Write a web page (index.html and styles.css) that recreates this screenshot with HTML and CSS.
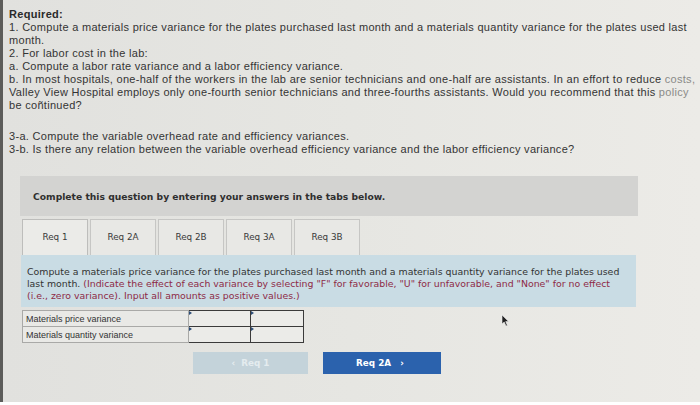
FILE: index.html
```html
<!DOCTYPE html>
<html>
<head>
<meta charset="utf-8">
<link rel="stylesheet" href="styles.css">
</head>
<body>
<div class="page">
  <div class="question">
    <p class="para"><b class="req">Required:</b><br>1. Compute a materials price variance for the plates purchased last month and a materials quantity variance for the plates used last<br>month.<br>2. For labor cost in the lab:<br>a. Compute a labor rate variance and a labor efficiency variance.<br>b. In most hospitals, one-half of the workers in the lab are senior technicians and one-half are assistants. In an effort to reduce <span class="glare">costs,</span><br>Valley View Hospital employs only one-fourth senior technicians and three-fourths assistants. Would you recommend that this <span class="glare">policy</span><br>be coñtinued?</p>
    <p class="para para2">3-a. Compute the variable overhead rate and efficiency variances.<br>3-b. Is there any relation between the variable overhead efficiency variance and the labor efficiency variance?</p>
  </div>

  <div class="panel">
    <div class="banner">Complete this question by entering your answers in the tabs below.</div>
    <div class="tabs">
      <div class="tab active">Req 1</div>
      <div class="tab">Req 2A</div>
      <div class="tab">Req 2B</div>
      <div class="tab">Req 3A</div>
      <div class="tab">Req 3B</div>
    </div>
    <div class="content">
      Compute a materials price variance for the plates purchased last month and a materials quantity variance for the plates used<br>last month. <span class="note">(Indicate the effect of each variance by selecting "F" for favorable, "U" for unfavorable, and "None" for no effect<br>(i.e., zero variance). Input all amounts as positive values.)</span>
    </div>
    <table class="grid">
      <tr>
        <td class="label">Materials price variance</td>
        <td class="input amt"></td>
        <td class="input sel"></td>
      </tr>
      <tr>
        <td class="label">Materials quantity variance</td>
        <td class="input amt"></td>
        <td class="input sel"></td>
      </tr>
    </table>
    <div class="nav">
      <div class="btn prev">&lsaquo;&nbsp;&nbsp;Req 1</div>
      <div class="btn next">Req 2A&nbsp;&nbsp;&nbsp;&rsaquo;</div>
    </div>
  </div>

  <svg class="cursor" width="9" height="13" viewBox="0 0 9 13"><path d="M1 1 L1 10 L3.2 8 L5 12 L6.4 11.4 L4.7 7.6 L7.6 7.6 Z" fill="#222" stroke="#eee" stroke-width="0.6"/></svg>
</div>
</body>
</html>
```
FILE: styles.css
```css
html, body {
  margin: 0;
  padding: 0;
}
body {
  width: 700px;
  height: 405px;
  overflow: hidden;
  background: #ffffff;
}
.page {
  position: relative;
  box-sizing: border-box;
  width: 700px;
  height: 402px;
  border-left: 3px solid #5c5c5a;
  background: linear-gradient(to right, #e1e1de 0%, #e6e6e2 50%, #ecebe7 100%);
  padding: 8px 0 0 6px;
  font-family: "Liberation Sans", Arial, sans-serif;
  color: #343434;
}
.question {
  font-size: 11px;
  line-height: 13px;
  letter-spacing: 0.3px;
}
.para {
  margin: 0;
  white-space: nowrap;
}
.para2 {
  margin-top: 18px;
}
.req {
  font-weight: bold;
  color: #2a2a2a;
}
.glare {
  color: #8a8a88;
}
.panel {
  margin: 20px 0 0 11px;
  width: 618px;
  font-family: "DejaVu Sans", Verdana, sans-serif;
}
.banner {
  height: 40px;
  background: #d3d3d1;
  display: flex;
  align-items: center;
  padding-left: 13px;
  font-size: 9.2px;
  font-weight: bold;
  color: #2f2f2f;
}
.tabs {
  display: flex;
  gap: 2px;
  margin: 3px 0 0 2px;
}
.tab {
  box-sizing: border-box;
  width: 66px;
  height: 36px;
  border: 1px solid #c6c6c4;
  border-bottom: none;
  background: #e8e8e5;
  display: flex;
  align-items: center;
  justify-content: center;
  font-size: 8.8px;
  color: #3a3a3a;
  padding-bottom: 2px;
}
.tab.active {
  background: #ebebe8;
  border-color: #bdbdbb;
}
.content {
  margin-left: 1px;
  width: 615px;
  box-sizing: border-box;
  height: 52px;
  background: #c9dce4;
  padding: 11px 0 0 6px;
  font-size: 9.4px;
  line-height: 12px;
  color: #333;
  white-space: nowrap;
}
.note {
  color: #8e2a46;
}
.grid {
  margin: 3px 0 0 2px;
  border-collapse: collapse;
  font-family: "Liberation Sans", Arial, sans-serif;
  font-size: 9px;
  color: #333;
}
.grid td {
  height: 15px;
  padding: 0;
}
.label {
  width: 162px;
  border: 1px solid #a9a9a7;
  padding-left: 3px !important;
  background: #e9e9e6;
}
.input {
  position: relative;
  border: 1.5px solid #3a3a3a;
  background: #ebebe8;
}
.input::before {
  content: "";
  position: absolute;
  left: 0;
  top: 0;
  border-left: 3px solid #2c4d78;
  border-top: 2px solid transparent;
  border-bottom: 2px solid transparent;
}
.amt {
  width: 61px;
}
.sel {
  width: 52px;
}
.nav {
  display: flex;
  gap: 15px;
  margin: 9px 0 0 173px;
}
.btn {
  height: 22px;
  display: flex;
  align-items: center;
  justify-content: center;
  font-size: 8.8px;
  font-weight: bold;
}
.prev {
  width: 115px;
  background: #c4d3da;
  color: #e4ecef;
}
.next {
  width: 118px;
  background: #2b62ad;
  color: #ffffff;
  padding-right: 4px;
  box-sizing: border-box;
}
.cursor {
  position: absolute;
  left: 498px;
  top: 314px;
}
```
